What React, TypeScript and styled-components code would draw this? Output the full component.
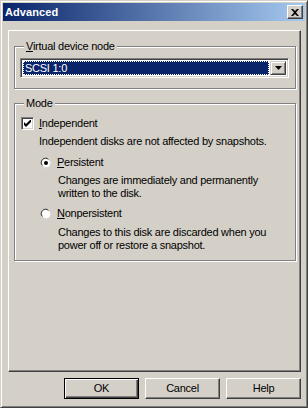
import React from "react";
import styled, { createGlobalStyle } from "styled-components";

const Global = createGlobalStyle`
  html, body { margin: 0; padding: 0; background: #D4D0C8; }
  body { font-family: "Liberation Sans", Arial, sans-serif; font-size: 11px; letter-spacing: -0.25px; color: #000; }
  * { box-sizing: border-box; }
`;

const Window = styled.div`
  width: 308px;
  height: 408px;
  background: #D4D0C8;
  display: flex;
  flex-direction: column;
  padding: 2px;
  border-top: 1px solid #D4D0C8;
  border-left: 1px solid #D4D0C8;
  border-right: 1px solid #404040;
  border-bottom: 1px solid #404040;
  box-shadow: inset 1px 1px 0 #fff, inset -1px -1px 0 #808080;
`;

const TitleBar = styled.div`
  height: 18px;
  flex: none;
  background: linear-gradient(to right, #0A246A, #A6CAF0);
  display: flex;
  align-items: center;
  justify-content: space-between;
  padding: 0 2px 0 2px;
`;

const Title = styled.span`
  color: #fff;
  font-family: "Liberation Sans", Arial, sans-serif;
  font-weight: bold;
  font-size: 11px;
  letter-spacing: 0.1px;
  line-height: 18px;
`;

const CloseButton = styled.div`
  width: 16px;
  height: 14px;
  background: #D4D0C8;
  border-top: 1px solid #fff;
  border-left: 1px solid #fff;
  border-right: 1px solid #404040;
  border-bottom: 1px solid #404040;
  box-shadow: inset -1px -1px 0 #808080;
  display: flex;
  align-items: center;
  justify-content: center;
`;

const Body = styled.div`
  flex: 1;
  display: flex;
  flex-direction: column;
  padding: 9px 4px 4px 5px;
`;

const Panel = styled.div`
  flex: 1;
  border-top: 1px solid #fff;
  border-left: 1px solid #fff;
  border-right: 1px solid #404040;
  border-bottom: 1px solid #404040;
  box-shadow: inset -1px -1px 0 #808080;
  padding: 9px 4px 0 5px;
  display: flex;
  flex-direction: column;
  gap: 8px;
`;

const Group = styled.fieldset`
  margin: 0;
  padding: 0 6px 0 5px;
  min-width: 0;
  border: 1px solid #808080;
  box-shadow: inset 1px 1px 0 #fff, 1px 1px 0 #fff;
`;

const Legend = styled.legend`
  margin-left: 4px;
  padding: 0 2px;
  line-height: 13px;
  background: #D4D0C8;
`;

const U = styled.span`
  text-decoration: underline;
  text-underline-offset: 1px;
`;

const Combo = styled.div`
  margin: 5px 0 10px 0;
  height: 20px;
  background: #fff;
  border-top: 1px solid #808080;
  border-left: 1px solid #808080;
  border-right: 1px solid #fff;
  border-bottom: 1px solid #fff;
  box-shadow: inset 1px 1px 0 #404040, inset -1px -1px 0 #D4D0C8;
  padding: 2px;
  display: flex;
  gap: 1px;
`;

const Selected = styled.div`
  flex: 1;
  background: #0A246A;
  color: #fff;
  outline: 1px dotted #fff;
  outline-offset: -1px;
  padding-left: 2px;
  line-height: 14px;
`;

const DropButton = styled.div`
  width: 16px;
  flex: none;
  background: #D4D0C8;
  border-top: 1px solid #D4D0C8;
  border-left: 1px solid #D4D0C8;
  border-right: 1px solid #404040;
  border-bottom: 1px solid #404040;
  box-shadow: inset 1px 1px 0 #fff, inset -1px -1px 0 #808080;
  display: flex;
  align-items: center;
  justify-content: center;
`;

const ModeBody = styled.div`
  padding: 7px 0 8px 1px;
  display: flex;
  flex-direction: column;
  white-space: nowrap;
`;

const Row = styled.div<{ $indent?: number; $top?: number }>`
  display: flex;
  align-items: center;
  gap: 5px;
  margin-left: ${(p) => p.$indent ?? 0}px;
  margin-top: ${(p) => p.$top ?? 0}px;
  line-height: 13px;
`;

const Text = styled.div<{ $indent: number; $top?: number }>`
  margin-left: ${(p) => p.$indent}px;
  margin-top: ${(p) => p.$top ?? 0}px;
  line-height: 13px;
`;

const CheckBox = styled.div`
  width: 13px;
  height: 13px;
  flex: none;
  background: #fff;
  border-top: 1px solid #808080;
  border-left: 1px solid #808080;
  border-right: 1px solid #fff;
  border-bottom: 1px solid #fff;
  box-shadow: inset 1px 1px 0 #404040, inset -1px -1px 0 #D4D0C8;
  display: flex;
  align-items: center;
  justify-content: center;
`;

const Radio = styled.svg`
  width: 12px;
  height: 12px;
  flex: none;
`;

const Footer = styled.div`
  display: flex;
  justify-content: flex-end;
  gap: 6px;
  padding-top: 6px;
  padding-bottom: 2px;
  flex: none;
`;

const Button = styled.div<{ $default?: boolean }>`
  width: 75px;
  height: 21px;
  background: #D4D0C8;
  display: flex;
  align-items: center;
  justify-content: center;
  border: 1px solid;
  border-color: ${(p) => (p.$default ? "#000" : "#fff #404040 #404040 #fff")};
  box-shadow: ${(p) =>
    p.$default
      ? "inset 1px 1px 0 #fff, inset -1px -1px 0 #404040, inset -2px -2px 0 #808080"
      : "inset -1px -1px 0 #808080"};
  line-height: 13px;
`;

function RadioIcon({ checked }: { checked?: boolean }) {
  return (
    <Radio viewBox="0 0 12 12">
      <path d="M1.5 8 A5 5 0 0 1 8 1.5" stroke="#808080" strokeWidth="1" fill="none" />
      <circle cx="6" cy="6" r="4.5" fill="#fff" />
      <path d="M2.5 8.5 A4 4 0 0 1 8.5 2.5" stroke="#404040" strokeWidth="1" fill="none" />
      <path d="M10.5 4 A5 5 0 0 1 4 10.5" stroke="#fff" strokeWidth="1" fill="none" />
      <path d="M9.5 3.5 A4 4 0 0 1 3.5 9.5" stroke="#D4D0C8" strokeWidth="1" fill="none" />
      {checked && <circle cx="6" cy="6" r="2" fill="#000" />}
    </Radio>
  );
}

export default function App() {
  return (
    <>
      <Global />
      <Window>
        <TitleBar>
          <Title>Advanced</Title>
          <CloseButton>
            <svg width="8" height="7" viewBox="0 0 8 7">
              <path d="M0 0h2l2 2 2-2h2L5 3.5 8 7H6L4 5 2 7H0l3-3.5z" fill="#000" />
            </svg>
          </CloseButton>
        </TitleBar>
        <Body>
          <Panel>
            <Group>
              <Legend>
                <U>V</U>irtual device node
              </Legend>
              <Combo>
                <Selected>SCSI 1:0</Selected>
                <DropButton>
                  <svg width="7" height="4" viewBox="0 0 7 4">
                    <path d="M0 0h7L3.5 4z" fill="#000" />
                  </svg>
                </DropButton>
              </Combo>
            </Group>
            <Group>
              <Legend>Mode</Legend>
              <ModeBody>
                <Row $indent={0}>
                  <CheckBox>
                    <svg width="7" height="7" viewBox="0 0 7 7">
                      <path d="M0 2v3l2 2 5-5V-1L2 4z" fill="#000" />
                    </svg>
                  </CheckBox>
                  <span>
                    <U>I</U>ndependent
                  </span>
                </Row>
                <Text $indent={18} $top={5}>
                  Independent disks are not affected by snapshots.
                </Text>
                <Row $indent={19} $top={8}>
                  <RadioIcon checked />
                  <span>
                    <U>P</U>ersistent
                  </span>
                </Row>
                <Text $indent={37} $top={5}>
                  Changes are immediately and permanently
                  <br />
                  written to the disk.
                </Text>
                <Row $indent={19} $top={7}>
                  <RadioIcon />
                  <span>
                    <U>N</U>onpersistent
                  </span>
                </Row>
                <Text $indent={37} $top={6}>
                  Changes to this disk are discarded when you
                  <br />
                  power off or restore a snapshot.
                </Text>
              </ModeBody>
            </Group>
          </Panel>
          <Footer>
            <Button $default>OK</Button>
            <Button>Cancel</Button>
            <Button>Help</Button>
          </Footer>
        </Body>
      </Window>
    </>
  );
}
